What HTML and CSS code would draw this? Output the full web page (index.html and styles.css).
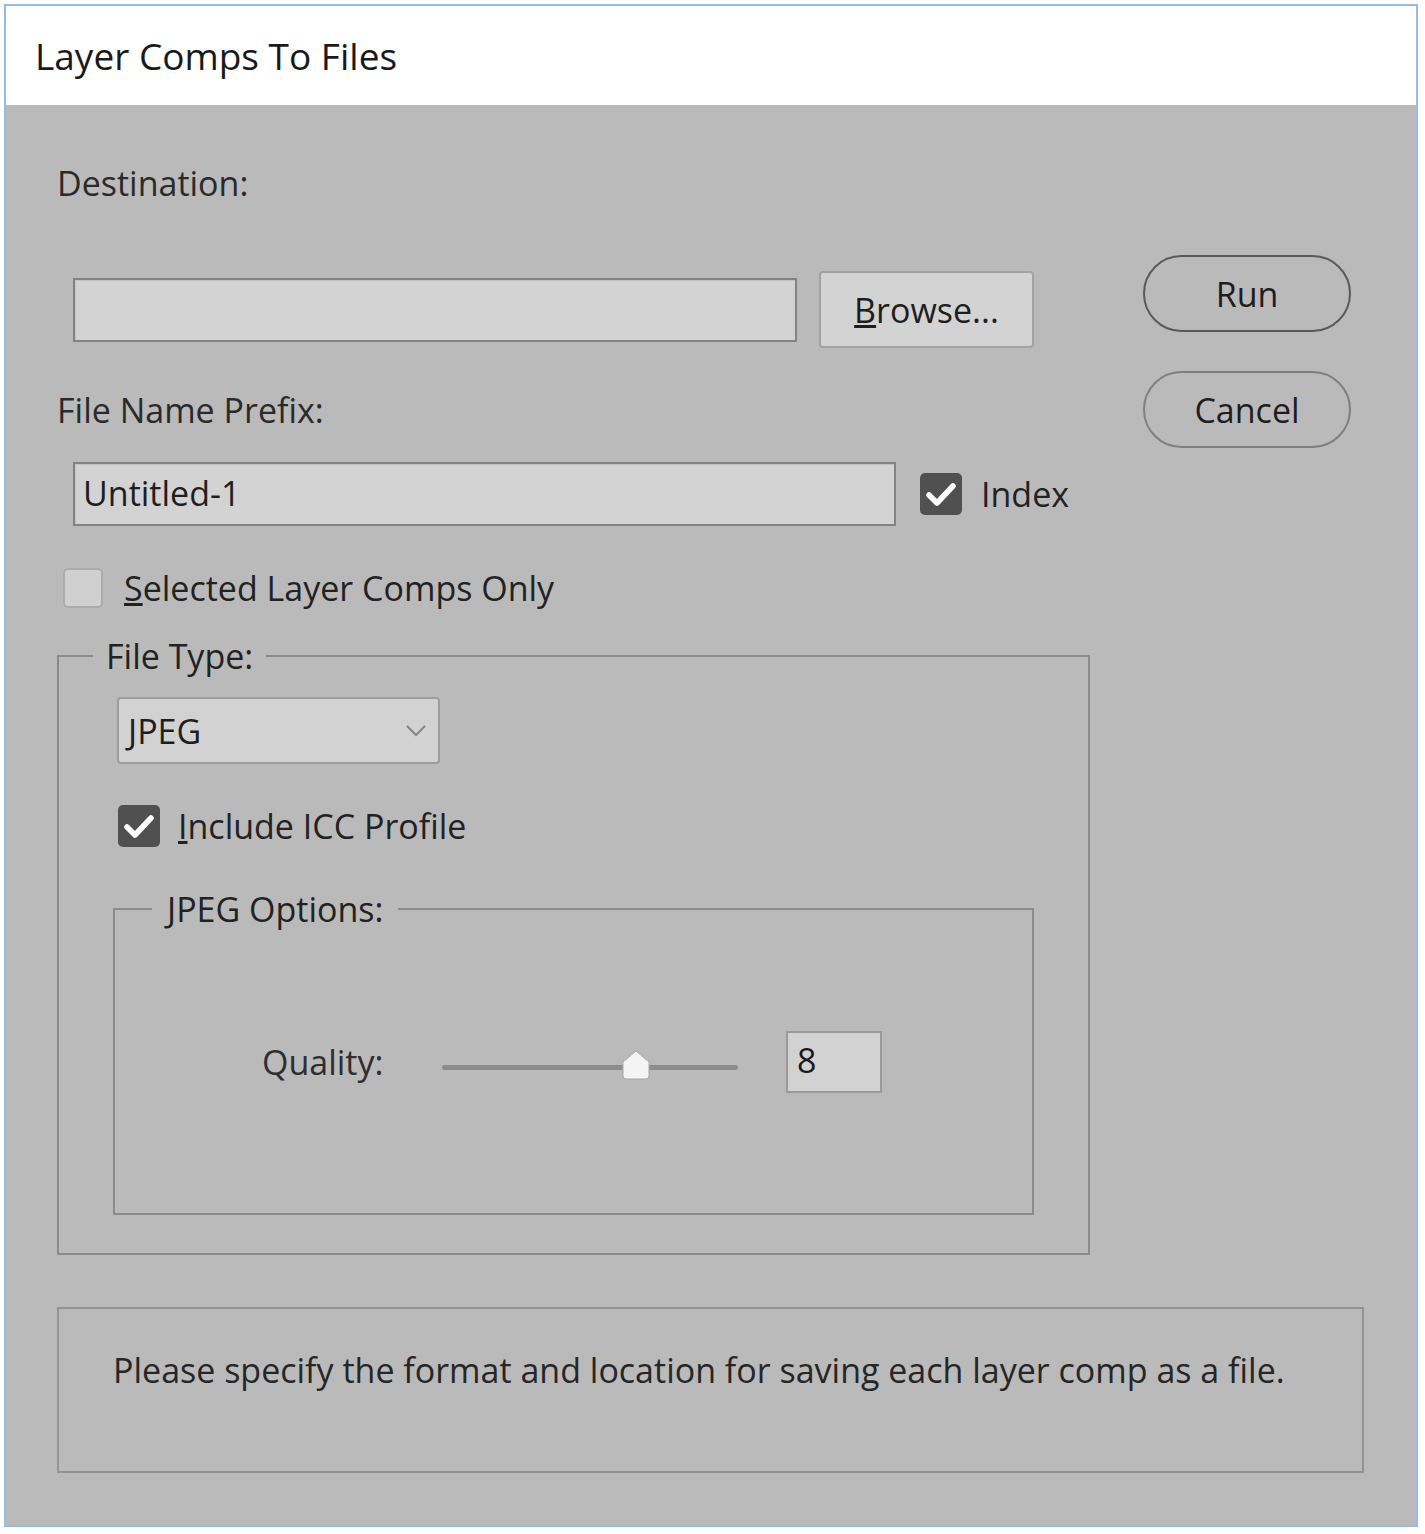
FILE: index.html
```html
<!DOCTYPE html>
<html lang="en">
<head>
<meta charset="utf-8">
<title>Layer Comps To Files</title>
<link rel="stylesheet" href="styles.css">
</head>
<body>
<div class="window">
  <div class="titlebar"><span class="title">Layer Comps To Files</span></div>
  <div class="dialog">
    <div class="top">
      <div class="main">
        <div class="label">Destination:</div>
        <div class="row row-dest">
          <div class="input input-dest"></div>
          <div class="btn-browse"><u>B</u>rowse...</div>
        </div>
        <div class="label label-prefix">File Name Prefix:</div>
        <div class="row row-prefix">
          <div class="input input-prefix">Untitled-1</div>
          <div class="check check-index">
            <span class="box box-on"><svg width="42" height="42" viewBox="0 0 42 42"><path d="M9 22 L17 30 L33 13" fill="none" stroke="#ffffff" stroke-width="5.5" stroke-linecap="round" stroke-linejoin="round"/></svg></span>
            <span class="check-text">Index</span>
          </div>
        </div>
        <div class="check check-selected">
          <span class="box box-off"></span>
          <span class="check-text"><u>S</u>elected Layer Comps Only</span>
        </div>
        <fieldset class="group group-type">
          <legend class="legend legend-type">File Type:</legend>
          <div class="group-body group-body-type">
            <div class="select">
              <span>JPEG</span>
              <svg class="chevron" width="20" height="12" viewBox="0 0 20 12"><path d="M1 1 L10 10 L19 1" fill="none" stroke="#858585" stroke-width="2"/></svg>
            </div>
            <div class="check check-icc">
              <span class="box box-on"><svg width="42" height="42" viewBox="0 0 42 42"><path d="M9 22 L17 30 L33 13" fill="none" stroke="#ffffff" stroke-width="5.5" stroke-linecap="round" stroke-linejoin="round"/></svg></span>
              <span class="check-text"><u>I</u>nclude ICC Profile</span>
            </div>
            <fieldset class="group group-jpeg">
              <legend class="legend legend-jpeg">JPEG Options:</legend>
              <div class="group-body group-body-jpeg">
                <div class="quality">
                  <span class="quality-label">Quality:</span>
                  <div class="slider">
                    <div class="track"></div>
                    <svg class="thumb" width="32" height="32" viewBox="0 0 32 32"><path d="M16 2 L29 13 L29 27 Q29 30 26 30 L6 30 Q3 30 3 27 L3 13 Z" fill="#f4f4f4" stroke="#a8a8a8" stroke-width="1"/></svg>
                  </div>
                  <div class="number">8</div>
                </div>
              </div>
            </fieldset>
          </div>
        </fieldset>
      </div>
      <div class="side">
        <div class="pill pill-run">Run</div>
        <div class="pill pill-cancel">Cancel</div>
      </div>
    </div>
    <div class="message">Please specify the format and location for saving each layer comp as a file.</div>
  </div>
</div>
</body>
</html>
```
FILE: styles.css
```css
html, body {
  margin: 0;
  padding: 0;
  background: #ffffff;
}

body {
  font-family: "Open Sans", "Noto Sans", sans-serif;
  color: #222222;
}

.window {
  margin: 4px 0 0 4px;
  width: 1410px;
  border: 2px solid #93bbe7;
  background: #bababa;
}

.titlebar {
  height: 99px;
  background: #ffffff;
  display: flex;
  align-items: center;
  padding-left: 29px;
}

.title {
  font-size: 37px;
  color: #1a1a1a;
  line-height: 40px;
}

.dialog {
  padding: 58px 52px 52px 51px;
}

.top {
  display: grid;
  grid-template-columns: 1033px 208px;
  column-gap: 53px;
  align-items: start;
}

.main {
  display: flex;
  flex-direction: column;
}

.label {
  font-size: 34px;
  line-height: 40px;
  height: 40px;
  color: #2a2a2a;
}

.label-prefix {
  margin-top: 42px;
}

.row {
  display: flex;
  align-items: center;
}

.row-dest {
  margin-top: 68px;
  height: 77px;
  padding-left: 16px;
  gap: 22px;
}

.input {
  box-sizing: border-box;
  height: 64px;
  background: #d3d3d3;
  border: 2px solid #838383;
  box-shadow: inset 1px 1px 0 #c2c2c2;
  font-size: 34px;
  line-height: 58px;
  padding-left: 8px;
  color: #1e1e1e;
}

.input-dest {
  width: 724px;
}

.btn-browse {
  box-sizing: border-box;
  width: 215px;
  height: 77px;
  background: #d3d3d3;
  border: 2px solid #a2a2a2;
  border-radius: 4px;
  font-size: 34px;
  display: flex;
  align-items: center;
  justify-content: center;
  color: #1e1e1e;
}

.row-prefix {
  margin-top: 32px;
  padding-left: 16px;
  gap: 24px;
}

.input-prefix {
  width: 823px;
}

.check {
  display: flex;
  align-items: center;
  font-size: 34px;
  color: #222222;
}

.box {
  box-sizing: border-box;
  flex: none;
  display: block;
  border-radius: 5px;
}

.box svg {
  display: block;
}

.box-on {
  width: 42px;
  height: 42px;
  background: #505050;
}

.box-off {
  width: 40px;
  height: 40px;
  background: #d0d0d0;
  border: 2px solid #acacac;
}

.check-index {
  gap: 19px;
}

.check-selected {
  margin-top: 42px;
  height: 40px;
  padding-left: 6px;
  gap: 21px;
}

.check-text {
  line-height: 40px;
}

.group {
  margin: 0;
  padding: 0;
  border: 2px solid #8b8b8b;
  min-width: 0;
}

.legend {
  font-size: 34px;
  line-height: 40px;
  color: #222222;
}

.group-type {
  margin-top: 28px;
}

.legend-type {
  margin-left: 34px;
  padding: 0 13px;
}

.group-body-type {
  padding: 21px 54px 38px 54px;
  display: flex;
  flex-direction: column;
  align-items: stretch;
}

.select {
  box-sizing: border-box;
  margin-left: 4px;
  width: 323px;
  height: 67px;
  background: #d2d2d2;
  border: 2px solid #9d9d9d;
  border-radius: 4px;
  display: flex;
  align-items: center;
  justify-content: space-between;
  padding: 0 12px 0 9px;
  font-size: 34px;
  color: #1e1e1e;
}

.chevron {
  display: block;
}

.check-icc {
  margin-top: 41px;
  margin-left: 5px;
  gap: 18px;
}

.group-jpeg {
  margin-top: 42px;
}

.legend-jpeg {
  margin-left: 37px;
  padding: 0 15px;
}

.group-body-jpeg {
  padding: 102px 0 120px 147px;
}

.quality {
  display: flex;
  align-items: center;
  height: 62px;
}

.quality-label {
  font-size: 34px;
  color: #2e2e2e;
  width: 180px;
}

.slider {
  position: relative;
  width: 296px;
  height: 40px;
  display: flex;
  align-items: center;
}

.track {
  width: 100%;
  height: 5px;
  border-radius: 3px;
  background: #8d8d8d;
  margin-top: 10px;
}

.thumb {
  position: absolute;
  left: 178px;
  top: 7px;
}

.number {
  box-sizing: border-box;
  margin-left: 48px;
  width: 96px;
  height: 62px;
  background: #d2d2d2;
  border: 2px solid #9a9a9a;
  font-size: 34px;
  line-height: 54px;
  padding-left: 9px;
  color: #1a1a1a;
}

.side {
  display: flex;
  flex-direction: column;
}

.pill {
  box-sizing: border-box;
  width: 208px;
  height: 77px;
  border-radius: 39px;
  display: flex;
  align-items: center;
  justify-content: center;
  font-size: 34px;
  color: #1e1e1e;
}

.pill-run {
  margin-top: 92px;
  border: 2px solid #595959;
}

.pill-cancel {
  margin-top: 39px;
  border: 2px solid #7f7f7f;
}

.message {
  box-sizing: border-box;
  margin-top: 52px;
  height: 166px;
  border: 2px solid #939393;
  padding: 41px 0 0 54px;
  font-size: 34px;
  line-height: 40px;
  color: #262626;
}
```
